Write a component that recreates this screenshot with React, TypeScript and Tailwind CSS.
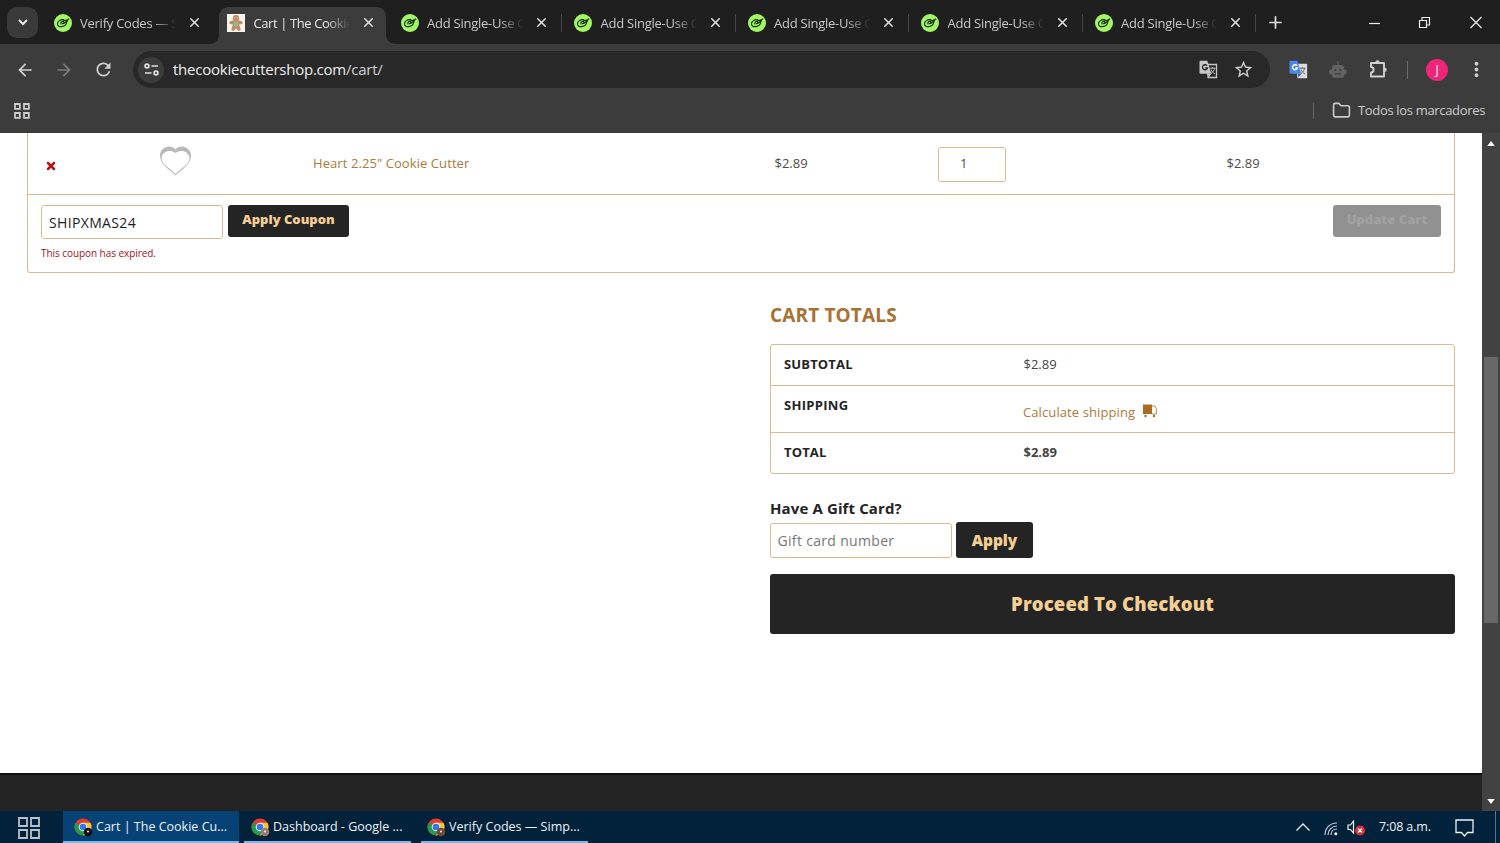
import { type FC, type ReactNode } from "react";
import { Folder, Plus, X } from "lucide-react";
import { MdArrowBack, MdArrowForward, MdMoreVert, MdRefresh, MdStarBorder } from "react-icons/md";

interface TabItem {
  title: string;
  active?: boolean;
  divider?: boolean;
}

const TABS: TabItem[] = [
  { title: "Verify Codes — S" },
  { title: "Cart | The Cookie", active: true },
  { title: "Add Single-Use C", divider: true },
  { title: "Add Single-Use C", divider: true },
  { title: "Add Single-Use C", divider: true },
  { title: "Add Single-Use C", divider: true },
  { title: "Add Single-Use C", divider: true },
];

const LimeIcon: FC = () => (
  <svg className="size-[18px] shrink-0" viewBox="0 0 18 18">
    <circle cx="9" cy="9" fill="#a3f765" r="9" />
    <g fill="none" stroke="#17310c" strokeLinecap="round" strokeLinejoin="round" strokeWidth="1.200">
      <path d="M9.500 5.800C6.500 5.200 3.500 7.300 3.500 9.700c0 2.500 2 3.300 4.300 2.900 2.500-.4 4.700-2 4.900-4.300" />
      <path d="M7 9.900c-.7-1.500 1-3 2.300-2.500 1.200.5.400 2.100-.8 2.200M9.500 5.800l1.700.9L14.700 5M10 9.300l3.700-2.600" />
    </g>
  </svg>
);

const GingerbreadIcon: FC = () => (
  <svg className="size-[18px] shrink-0" viewBox="0 0 18 18">
    <path d="M0 0h18v18H0z" fill="#f7f3ed" />
    <g fill="#c08a62">
      <circle cx="9" cy="4.200" r="3.200" />
      <path d="M6.500 6.500 4 7a1.600 1.600 0 0 0 0 3.200l2 .2-1.400 3.800a1.700 1.700 0 0 0 3 1.800L9 14.200l1.400 1.800a1.700 1.700 0 0 0 3-1.800L12 10.400l2-.2A1.600 1.600 0 0 0 14 7l-2.500-.5z" />
    </g>
    <path d="M7 7.500h4l.7 4L9 13l-2.700-1.500z" fill="#9ab38c" />
    <circle cx="7.700" cy="3.800" fill="#f3dfc4" r=".6" />
    <circle cx="10.300" cy="3.800" fill="#f3dfc4" r=".6" />
  </svg>
);

const BrowserTab: FC<TabItem> = ({ title, active, divider }) => (
  <div className="relative flex h-[37px] w-[173.500px] shrink-0 items-center pb-[6px] pl-[12px]">
    {active && (
      <svg className="absolute -left-[6px] top-0 h-[37px] w-[187px]" viewBox="0 0 187 37">
        <path
          d="M0 37c6 0 10-4 10-10V10C10 4 14 0 20 0h147c6 0 10 4 10 10v17c0 6 4 10 10 10z"
          fill="#3c3c3c"
        />
      </svg>
    )}
    <div className="relative flex items-center">
      {active ? <GingerbreadIcon /> : <LimeIcon />}
      <span
        className={`ml-[8.500px] w-[98px] whitespace-nowrap text-[13px] leading-[20px] [mask-image:linear-gradient(to_right,black_74%,transparent_98%)] ${active ? "tracking-[-0.400px] text-[#e8e8e8]" : "tracking-[-0.250px] text-[#c8c8c8]"}`}
      >
        {title}
      </span>
      <X className="ml-[9px] size-[15px] text-[#dedede]" strokeWidth={2.500} />
    </div>
    {divider && <div className="ml-auto h-[18px] w-px bg-[#474747]" />}
  </div>
);

const TabStrip: FC = () => (
  <div className="flex h-[44px] items-start bg-[#1f1f1f] pt-[7px]">
    <button className="ml-[7px] mr-[3.500px] flex h-[31px] w-[31px] items-center justify-center rounded-[10px] bg-[#3a3a3a]">
      <svg className="h-[7px] w-[10px]" fill="none" stroke="#e6e6e6" strokeWidth="2" viewBox="0 0 10 7">
        <path d="m1 1 4 4 4-4" />
      </svg>
    </button>
    {TABS.map((tab, i) => (
      <BrowserTab key={i} {...tab} />
    ))}
    <Plus className="ml-[10px] mt-[6px] size-[19px] text-[#dedede]" strokeWidth={2.200} />
    <svg
      className="ml-auto mr-[18px] mt-[9px] h-[13px] w-[114px]"
      fill="none"
      stroke="#ededed"
      strokeWidth="1.200"
      viewBox="0 0 114 13"
    >
      <path d="M1 7.500h11" />
      <path d="M51.500 4.500h7v7h-7zM54 4V1.500h7.500v7.500H59" />
      <path d="m102.500 1 11 11M113.500 1l-11 11" />
    </svg>
  </div>
);

const TranslateIcon: FC<{ color?: boolean }> = ({ color }) => (
  <svg className="size-[19px]" viewBox="0 0 19 19">
    <path
      d="M8.500 4.500h9v13h-8.500z"
      fill={color ? "#dcdcdc" : "none"}
      stroke={color ? "#dcdcdc" : "#c7c7c7"}
      strokeWidth="1.300"
    />
    <path d="M1.500.7h6.800l4 13H1.500a1 1 0 0 1-1-1v-11a1 1 0 0 1 1-1z" fill={color ? "#4c87ee" : "#c7c7c7"} />
    <path d="m9 13.700 3.300 0-2.800 3.800z" fill={color ? "#285dbf" : "#c7c7c7"} />
    <path
      d="M8 5.700a2.500 2.500 0 1 0 .4 2.300H6.300"
      fill="none"
      stroke={color ? "#ffffff" : "#282828"}
      strokeWidth="1.300"
    />
    <path
      d="M11 8.200h5.500M13.500 7v1.200M15.500 8.500c-.5 2.300-2 4-3.500 5M12 9.500c.8 2 2.300 3.500 4 4.500"
      fill="none"
      stroke={color ? "#686868" : "#c7c7c7"}
    />
  </svg>
);

const RobotIcon: FC = () => (
  <svg className="size-[18px]" fill="#626262" viewBox="0 0 18 18">
    <path d="M8.400 0h1.200v5H8.400z" />
    <path d="M6 4h6a3 3 0 0 1 3 3v1.500h1a1.700 1.700 0 0 1 1.700 1.700v1.500a1.700 1.700 0 0 1-1.700 1.700h-1v1.400a2 2 0 0 1-2 2H5a2 2 0 0 1-2-2v-1.400H2a1.700 1.700 0 0 1-1.700-1.700v-1.500A1.700 1.700 0 0 1 2 8.500h1V7a3 3 0 0 1 3-3z" />
    <circle cx="6.500" cy="9" fill="#3c3c3c" r="1.100" />
    <circle cx="11.500" cy="9" fill="#3c3c3c" r="1.100" />
    <path d="M6 13h6" stroke="#3c3c3c" strokeWidth="1.200" />
  </svg>
);

const PuzzleIcon: FC = () => (
  <svg className="size-[19px]" viewBox="0 0 19 19">
    <path
      d="M2 3h13v13.500H2v-4c1.600 0 2.600-1.200 2.600-2.700S3.600 7 2 7z"
      fill="none"
      stroke="#d0d0d0"
      strokeLinejoin="round"
      strokeWidth="1.900"
    />
    <path d="M6.300 2.500a2.200 2.200 0 0 1 4.400 0zM15.500 7.500a2.200 2.200 0 0 1 0 4.400z" fill="#d0d0d0" />
  </svg>
);

const Toolbar: FC = () => (
  <div className="flex h-[51px] items-center text-[#d0d0d0]">
    <MdArrowBack className="ml-[15px] size-[20px]" />
    <MdArrowForward className="ml-[19px] size-[20px] text-[#7b7b7b]" />
    <MdRefresh className="ml-[19px] size-[21px]" />
    <div className="ml-[19px] flex h-[37px] w-[1137px] items-center rounded-full bg-[#282828] pl-[5px] pr-[16px]">
      <div className="flex size-[26px] items-center justify-center rounded-full bg-[#3c3c3c]">
        <svg className="h-[13px] w-[15px]" fill="none" stroke="#dedede" strokeWidth="1.700" viewBox="0 0 15 13">
          <circle cx="3" cy="3" r="1.900" />
          <path d="M7.500 3H14M1 10h6.500" />
          <circle cx="12" cy="10" r="1.900" />
        </svg>
      </div>
      <span className="ml-[9px] whitespace-nowrap text-[15px] tracking-[-0.240px] text-[#eeeeee]">
        thecookiecuttershop.com<span className="text-[#cfcfcf]">/cart/</span>
      </span>
      <div className="ml-auto flex items-center gap-[15px]">
        <TranslateIcon />
        <MdStarBorder className="size-[21px]" />
      </div>
    </div>
    <div className="ml-[19px] flex items-center">
      <TranslateIcon color />
      <div className="ml-[21px]">
        <RobotIcon />
      </div>
      <div className="ml-[22px]">
        <PuzzleIcon />
      </div>
      <div className="ml-[19px] h-[18px] w-px bg-[#6a6a6a]" />
      <div className="ml-[18px] flex size-[22px] items-center justify-center rounded-full bg-[#ee2579] text-[12px] text-white">
        J
      </div>
      <MdMoreVert className="ml-[17px] size-[23px]" />
    </div>
  </div>
);

const BookmarksBar: FC = () => (
  <div className="flex h-[38px] items-center pb-[7px] pl-[14px] pr-[15px] text-[#cccccc]">
    <svg className="size-[16px]" fill="none" stroke="#cccccc" strokeWidth="1.800" viewBox="0 0 16 16">
      <path d="M1 1h4.800v4.800H1zM10 1h4.800v4.800H10zM1 10h4.800v4.800H1zM10 10h4.800v4.800H10z" />
    </svg>
    <div className="ml-auto h-[16px] w-px bg-[#686868]" />
    <Folder className="ml-[18px] size-[19px]" strokeWidth={2} />
    <span className="ml-[7px] w-[127px] whitespace-nowrap text-[13px] tracking-[-0.330px]">
      Todos los marcadores
    </span>
  </div>
);

const HeartCutter: FC = () => (
  <svg className="h-[30px] w-[33px]" viewBox="0 0 33 30">
    <path
      d="M16.500 29.500C12 24 1 19.500 1 9.500 1 1.500 11.500-2.500 16.500 3.500 21.500-2.500 32 1.500 32 9.500c0 10-11 14.500-15.500 20z"
      fill="#b9b9b9"
    />
    <path
      d="M16.500 28C12.500 23 2.600 19 2.600 12.500c0-7.500 9-9.500 13.900-5.500C21.400 3 30.400 5 30.400 12.500c0 6.500-9.900 10.500-13.900 15.500z"
      fill="#ffffff"
    />
  </svg>
);

interface DarkButtonProps {
  className: string;
  children: ReactNode;
}

const DarkButton: FC<DarkButtonProps> = ({ className, children }) => (
  <button
    className={`flex items-center justify-center whitespace-nowrap rounded-[3px] bg-[#242424] font-extrabold text-[#f5cf94] ${className}`}
  >
    {children}
  </button>
);

const CartTable: FC = () => (
  <div className="h-[140px] rounded-b-[3px] border border-t-0 border-[#dfb98c]">
    <div className="flex h-[62px] items-center border-b border-[#dfb98c] pt-px text-[13px] text-[#4c4c4c]">
      <div className="w-[131px] pl-[17px] pt-[3px]">
        <X className="size-[12px] text-[#b5121b]" strokeWidth={5} />
      </div>
      <div className="mb-[7px] w-[154px]">
        <HeartCutter />
      </div>
      <a className="w-[461.500px] tracking-[0.080px] text-[#ad7a38]">Heart 2.25&quot; Cookie Cutter</a>
      <span className="w-[163.500px]">$2.89</span>
      <div className="flex h-[35px] w-[68px] items-center rounded-[3px] border border-[#dfb98c] pl-[21px]">
        1
      </div>
      <span className="ml-[220.500px]">$2.89</span>
    </div>
    <div className="flex items-start justify-between px-[13px] pt-[10px]">
      <div>
        <div className="flex items-start">
          <input
            className="h-[34px] w-[182px] rounded-[3px] border border-[#dfb98c] px-[7px] text-[14px] tracking-[0.350px] text-[#1c1c1c]"
            defaultValue="SHIPXMAS24"
          />
          <DarkButton className="ml-[5px] h-[32px] w-[121px] pb-[2px] text-[13px]">Apply Coupon</DarkButton>
        </div>
        <p className="mt-[6px] text-[10px] leading-[16px] tracking-[-0.060px] text-[#a80e22]">
          This coupon has expired.
        </p>
      </div>
      <button className="h-[32px] w-[108px] rounded-[3px] bg-[#919191] pb-[2px] text-[13px] font-extrabold text-[#a1a1a1]">
        Update Cart
      </button>
    </div>
  </div>
);

const CartTotals: FC = () => (
  <div className="ml-auto mt-[29px] w-[685px]">
    <h2 className="h-[42px] text-[19px] font-bold leading-[26px] tracking-[0.150px] text-[#a87132]">
      CART TOTALS
    </h2>
    <div className="rounded-[3px] border border-[#dfb98c] text-[13px] leading-[20px] text-[#444444]">
      <div className="flex h-[40px] pl-[13px] pt-[9px]">
        <span className="w-[239.500px] font-bold tracking-[0.150px] text-[#242424]">SUBTOTAL</span>
        <span>$2.89</span>
      </div>
      <div className="flex h-[48px] border-y border-[#dfb98c] pl-[13px] pt-[9px]">
        <span className="w-[239px] font-bold tracking-[0.300px] text-[#242424]">SHIPPING</span>
        <a className="flex pt-[7px] tracking-[0.100px] text-[#ad7a38]">
          Calculate shipping
          <svg className="ml-[8px] mt-[2px] h-[14px] w-[14px]" viewBox="0 0 14 14">
            <path d="M0 .5h9v9.500H0z" fill="#a86b20" />
            <path d="M9 2h3l1.400 2.500V10H9" fill="none" stroke="#b98a50" />
            <circle cx="2.500" cy="12" fill="#a86b20" r="1.200" />
            <circle cx="11" cy="12" fill="#a86b20" r="1.200" />
          </svg>
        </a>
      </div>
      <div className="flex h-[40px] pl-[13px] pt-[9px] font-bold">
        <span className="w-[239.500px] tracking-[0.150px] text-[#242424]">TOTAL</span>
        <span>$2.89</span>
      </div>
    </div>
    <h4 className="mt-[23px] text-[15px] font-bold leading-[22px] tracking-[0.120px] text-[#242424]">
      Have A Gift Card?
    </h4>
    <div className="mt-[3px] flex">
      <input
        className="mt-px h-[35px] w-[182px] rounded-[3px] border border-[#dfb98c] px-[6.500px] text-[14px] tracking-[0.320px] placeholder:text-[#777777]"
        placeholder="Gift card number"
      />
      <DarkButton className="ml-[4px] h-[36px] w-[77px] pt-px text-[15.500px]">Apply</DarkButton>
    </div>
    <DarkButton className="mt-[16px] h-[60px] w-full text-[18.500px] tracking-[0.150px]">
      Proceed To Checkout
    </DarkButton>
  </div>
);

const Scrollbar: FC = () => (
  <div className="flex w-[18px] flex-col items-center bg-[#424242]">
    <svg className="mt-[8px] h-[5px] w-[8px]" fill="#ffffff" viewBox="0 0 9 6">
      <path d="M4.500 0 9 6H0z" />
    </svg>
    <div className="mt-[211px] h-[266px] w-[14px] bg-[#686868]" />
    <svg className="mb-[7px] mt-auto h-[5px] w-[8px]" fill="#ffffff" viewBox="0 0 9 6">
      <path d="M0 0h9L4.500 6z" />
    </svg>
  </div>
);

const ChromeLogo: FC<{ badge: string }> = ({ badge }) => (
  <svg className="size-[20px] shrink-0" viewBox="0 0 20 20">
    <circle cx="9" cy="9" fill="#e33b2e" r="8.500" />
    <path d="M9 9 1.640 4.750A8.500 8.500 0 0 0 9 17.500l4-6.500z" fill="#239b4b" />
    <path d="M9 17.500A8.500 8.500 0 0 0 16.360 4.750H9L12.700 11z" fill="#fbc52c" />
    <circle cx="9" cy="9" fill="#f4f4f4" r="4.300" />
    <circle cx="9" cy="9" fill="#3378e8" r="3.300" />
    <circle cx="14" cy="14" fill={badge} r="4.300" />
    <circle cx="14" cy="13.500" fill="#f0ddd0" r="1.100" />
  </svg>
);

const TASKS = [
  { title: "Cart | The Cookie Cu...", badge: "#121212", box: "w-[176px] bg-[#064275] pl-[11px]" },
  { title: "Dashboard - Google ...", badge: "#967c74", box: "ml-[5px] w-[167px] pl-[7px]" },
  { title: "Verify Codes — Simp...", badge: "#70483a", box: "ml-[10px] w-[167px] pl-[6px]" },
];

const Taskbar: FC = () => (
  <div className="flex h-[32px] bg-[#02213b] text-[12.500px] text-[#eef3f7]">
    <svg
      className="ml-[18px] mr-[23px] mt-[6px] size-[22px]"
      fill="none"
      stroke="#bac2c9"
      strokeWidth="1.800"
      viewBox="0 0 22 22"
    >
      <path d="M1 1h8v8H1zM13 1h8v8h-8zM1 13h8v8H1zM13 13h8v8h-8z" />
    </svg>
    {TASKS.map(({ title, badge, box }) => (
      <div key={title} className={`flex h-[32px] items-center border-b-2 border-[#76b9ed] pt-[3px] ${box}`}>
        <ChromeLogo badge={badge} />
        <span className="ml-[2px] whitespace-nowrap tracking-[0.010px]">{title}</span>
      </div>
    ))}
    <div className="ml-auto flex items-center">
      <svg className="h-[8px] w-[14px]" fill="none" stroke="#eef3f7" strokeWidth="1.300" viewBox="0 0 14 8">
        <path d="m.5 7.500 6.500-6.500 6.500 6.500" />
      </svg>
      <svg className="ml-[14px] mt-[3px] size-[14px]" fill="none" stroke="#c7d0d8" viewBox="0 0 14 14">
        <path d="M1 13C1 6 6 1 13 1M4 13c0-5 4-9 9-9M7 13c0-3.500 2.500-6 6-6" strokeWidth="1.200" />
        <circle cx="11.800" cy="11.800" fill="#ffffff" r="1.500" stroke="none" />
      </svg>
      <svg className="ml-[9px] mt-[2px] h-[16px] w-[19px]" viewBox="0 0 19 16">
        <path d="M1 5h2.500l3-4v12l-3-3.500H1z" fill="none" stroke="#eef3f7" strokeWidth="1.200" />
        <circle cx="13" cy="10.500" fill="#d92f36" r="5" />
        <path d="m11 8.500 4 4m0-4-4 4" stroke="#ffffff" strokeWidth="1.300" />
      </svg>
      <span className="ml-[13px] w-[53px] whitespace-nowrap pt-px tracking-[-0.120px]">7:08 a.m.</span>
      <svg
        className="ml-[23px] mr-[21px] mt-px h-[18px] w-[19px]"
        fill="none"
        stroke="#eef3f7"
        strokeWidth="1.300"
        viewBox="0 0 19 18"
      >
        <path d="M1 1h17v12.500h-5.500L9.500 17l-3-3.500H1z" />
      </svg>
      <div className="mr-[4px] h-[32px] w-px bg-[#5c7182]" />
    </div>
  </div>
);

export default function App() {
  return (
    <div className="flex h-[843px] w-[1500px] flex-col overflow-hidden bg-white font-['Open_Sans',sans-serif]">
      <div className="bg-[#3c3c3c]">
        <TabStrip />
        <Toolbar />
        <BookmarksBar />
      </div>
      <div className="flex h-[678px]">
        <main className="flex flex-1 flex-col">
          <div className="pl-[27px] pr-[27px]">
            <CartTable />
            <CartTotals />
          </div>
          <footer className="mt-auto h-[38px] border-t-2 border-[#101010] bg-[#242424]" />
        </main>
        <Scrollbar />
      </div>
      <Taskbar />
    </div>
  );
}
